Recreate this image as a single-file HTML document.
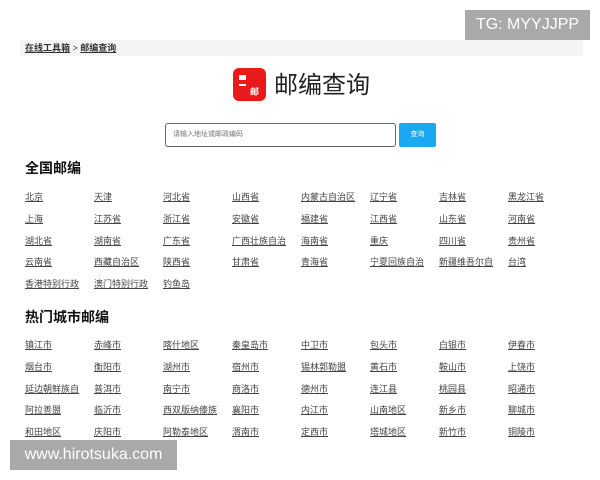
<!DOCTYPE html><html><head><meta charset="utf-8"><style>
body{margin:0;width:600px;height:480px;background:#fff;position:relative;overflow:hidden;font-family:"Liberation Sans","Noto Sans CJK SC",sans-serif}
.a{position:absolute}
.bc{left:20px;top:40px;width:563px;height:16px;background:#f4f4f4;font-size:9px;line-height:16px;color:#333}
.bc span{font-weight:bold;text-decoration:underline;margin-left:5px}
.l{position:absolute;font-size:9px;color:#444;text-decoration:underline;line-height:12px;white-space:nowrap}
h2{position:absolute;margin:0;font-size:14px;font-weight:bold;color:#111;left:25px}
.wm{background:#a9a9a9;color:#fff;font-size:16px;text-align:center}
</style></head><body>
<div class="a wm" style="left:465px;top:10px;width:125px;height:30px;line-height:30px">TG: MYYJJPP</div>
<div class="a bc"><span>在线工具箱</span> &gt; <span style="margin-left:0">邮编查询</span></div>
<div class="a" style="left:233px;top:68px;width:33px;height:33px;background:#e81a1a;border-radius:6px">
<div class="a" style="left:6px;top:7px;width:7px;height:5px;background:#fff"></div>
<div class="a" style="left:6px;top:16px;width:7px;height:2px;background:#fff"></div>
<div class="a" style="left:17px;top:17px;color:#fff;font-size:9px;font-weight:bold">邮</div></div>
<div class="a" style="left:274px;top:70px;font-size:24px;line-height:32px;color:#222">邮编查询</div>
<div class="a" style="left:165px;top:123px;width:229px;height:22px;border:1px solid #666;border-radius:3px;font-size:7px;line-height:22px;color:#777;text-indent:7px">请输入地址或邮政编码</div>
<div class="a" style="left:399px;top:123px;width:37px;height:24px;background:#1ba8f2;border-radius:2px;color:#fff;font-size:7px;line-height:24px;text-align:center">查询</div>
<h2 style="top:158px">全国邮编</h2>
<h2 style="top:307px">热门城市邮编</h2>
<div id="g"></div>
<div class="a wm" style="left:10px;top:440px;width:167px;height:30px;line-height:30px">www.hirotsuka.com</div>
<script>
var n="北京 天津 河北省 山西省 内蒙古自治区 辽宁省 吉林省 黑龙江省 上海 江苏省 浙江省 安徽省 福建省 江西省 山东省 河南省 湖北省 湖南省 广东省 广西壮族自治 海南省 重庆 四川省 贵州省 云南省 西藏自治区 陕西省 甘肃省 青海省 宁夏回族自治 新疆维吾尔自 台湾 香港特别行政 澳门特别行政 钓鱼岛".split(" ");
var h="镇江市 赤峰市 喀什地区 秦皇岛市 中卫市 包头市 白银市 伊春市 烟台市 衡阳市 湖州市 宿州市 锡林郭勒盟 黄石市 鞍山市 上饶市 延边朝鲜族自 普洱市 南宁市 商洛市 德州市 连江县 桃园县 昭通市 阿拉善盟 临沂市 西双版纳傣族 襄阳市 内江市 山南地区 新乡市 聊城市 和田地区 庆阳市 阿勒泰地区 渭南市 定西市 塔城地区 新竹市 铜陵市".split(" ");
var s="";function put(a,y0){a.forEach(function(t,i){s+='<div class="l" style="left:'+(25+69*(i%8))+'px;top:'+(y0+21.8*Math.floor(i/8))+'px">'+t+'</div>'})}
put(n,191);put(h,339);document.getElementById("g").innerHTML=s;
</script></body></html>
